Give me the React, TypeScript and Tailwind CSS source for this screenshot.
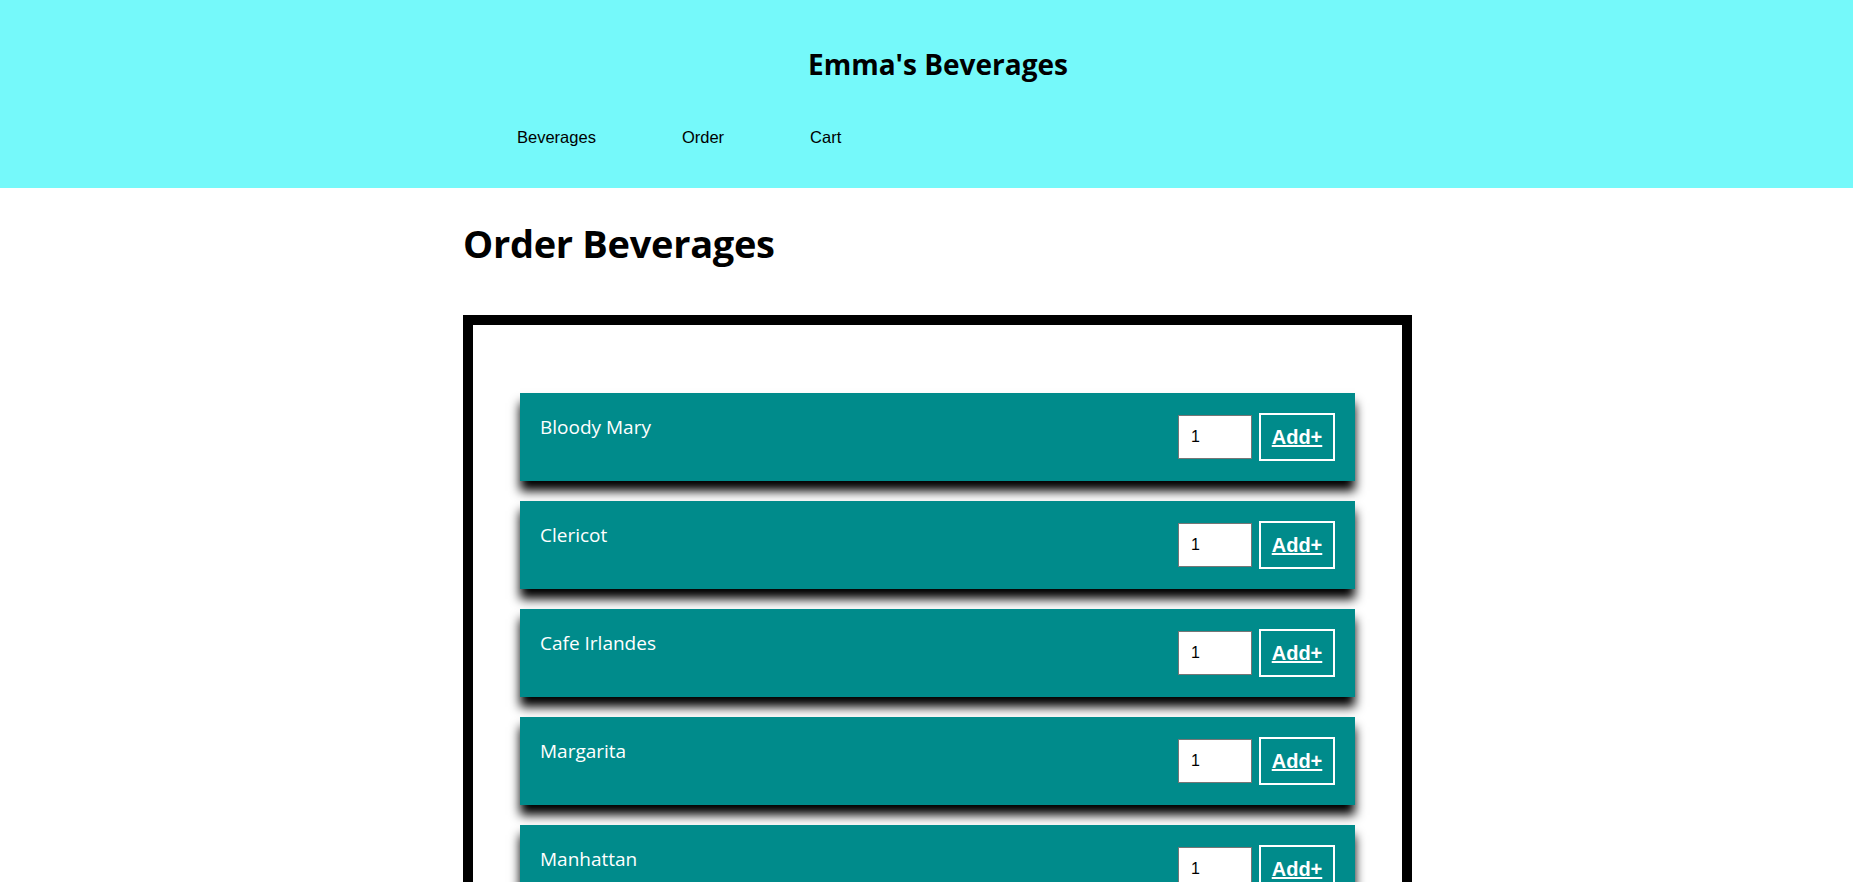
import React from "react";

const drinks = ["Bloody Mary", "Clericot", "Cafe Irlandes", "Margarita", "Manhattan", "Mojito"];

function DrinkCard({ name }: { name: string }) {
  return (
    <div className="mb-[20px] flex items-start justify-between bg-[#008b8b] p-[20px] shadow-[0_10px_10px_black]">
      <div className="text-[19px] leading-[28px] text-white [font-family:'Open_Sans',sans-serif]">{name}</div>
      <div className="flex items-center gap-[7px]">
        <input
          type="number"
          defaultValue={1}
          className="box-border h-[44px] w-[74px] border border-[#767676] bg-white px-[12px] text-[16px] text-black [font-family:'Liberation_Sans',Arial,sans-serif] outline-none [appearance:textfield]"
        />
        <button className="box-border flex h-[48px] w-[76px] items-center justify-center border-2 border-white text-[20px] font-bold text-white underline [font-family:'Liberation_Sans',Arial,sans-serif]">
          Add+
        </button>
      </div>
    </div>
  );
}

export default function App() {
  return (
    <div className="min-h-screen bg-white [font-family:'Open_Sans',sans-serif]">
      <header className="h-[188px] bg-[#75f9fa]">
        <h1 className="pl-[23px] pt-[50px] text-center text-[28px] font-bold leading-none text-black">Emma's Beverages</h1>
        <nav className="mt-[51px] flex gap-[86px] pl-[517px] text-[16.5px] leading-none text-black [font-family:'Liberation_Sans',Arial,sans-serif]">
          <a>Beverages</a>
          <a>Order</a>
          <a>Cart</a>
        </nav>
      </header>
      <main className="pl-[463px]">
        <h2 className="mt-[36px] text-[38px] font-bold leading-none tracking-[-0.3px] text-black">Order Beverages</h2>
        <div className="mt-[53px] box-border w-[949px] border-[10px] border-black px-[47px] pb-[40px] pt-[68px]">
          {drinks.map((d) => (
            <DrinkCard key={d} name={d} />
          ))}
        </div>
      </main>
    </div>
  );
}
